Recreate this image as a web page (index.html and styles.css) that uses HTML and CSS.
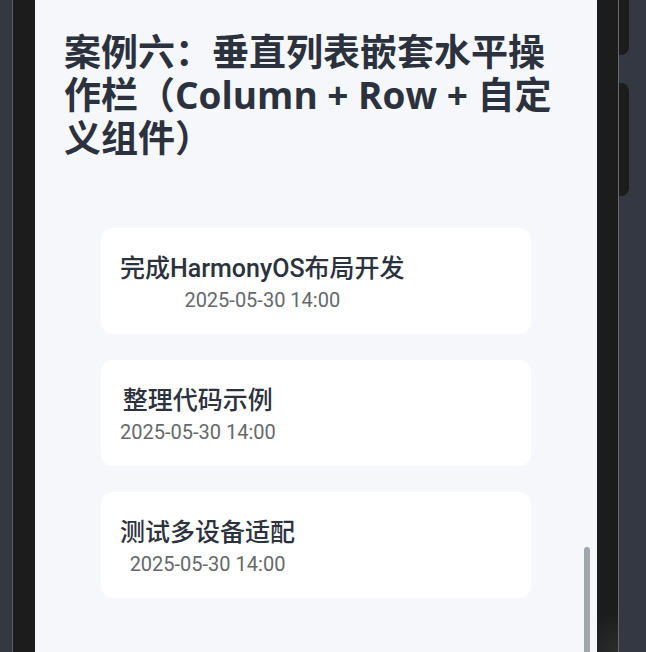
FILE: index.html
```html
<!DOCTYPE html>
<html lang="zh-CN">
<head>
    <meta charset="UTF-8">
    <meta name="viewport" content="width=device-width, initial-scale=1.0">
    <title>案例六</title>
    <link rel="stylesheet" href="styles.css">
</head>
<body>
    <div class="device">
        <div class="edge edge-left"></div>
        <div class="bezel">
            <div class="screen">
                <h1 class="page-title">案例六：垂直列表嵌套水平操作栏（Column + Row + 自定义组件）</h1>
                <div class="task-list">
                    <div class="task-card">
                        <div class="task-info">
                            <span class="task-name">完成HarmonyOS布局开发</span>
                            <span class="task-time">2025-05-30 14:00</span>
                        </div>
                    </div>
                    <div class="task-card">
                        <div class="task-info">
                            <span class="task-name">整理代码示例</span>
                            <span class="task-time">2025-05-30 14:00</span>
                        </div>
                    </div>
                    <div class="task-card">
                        <div class="task-info">
                            <span class="task-name">测试多设备适配</span>
                            <span class="task-time">2025-05-30 14:00</span>
                        </div>
                    </div>
                </div>
                <div class="scroll-thumb"></div>
            </div>
        </div>
        <div class="edge edge-right">
            <div class="side-key key-top"></div>
            <div class="side-key key-power"></div>
        </div>
    </div>
</body>
</html>
```

FILE: styles.css
```css
* {
    margin: 0;
    padding: 0;
    box-sizing: border-box;
}

body {
    background-color: #343842;
    height: 652px;
    overflow: hidden;
    font-family: Roboto, "Noto Sans CJK SC", sans-serif;
}

.device {
    display: flex;
    height: 652px;
}

.edge {
    background-color: #343842;
}

.edge-left {
    width: 12px;
}

.edge-right {
    width: 27px;
}

.bezel {
    background-color: #1c1c1c;
    background-image: radial-gradient(circle at 100% 100%, #2c2c2c 0, #1c1c1c 40px);
    border-left: 1px solid #5e5e5e;
    border-right: 1px solid #6a6a6a;
    padding: 0 21px 0 22px;
}

.screen {
    position: relative;
    width: 562px;
    height: 652px;
    background-color: #f5f7fb;
    padding: 30px 29px 0;
    overflow: hidden;
}

.page-title {
    max-width: 490px;
    color: #2c323d;
    font-family: "Open Sans", "Noto Sans CJK SC", sans-serif;
    font-size: 37px;
    line-height: 43px;
    font-weight: 700;
}

.task-list {
    display: flex;
    flex-direction: column;
    align-items: center;
    gap: 26px;
    margin-top: 69px;
}

.task-card {
    width: 430px;
    height: 106px;
    background: white;
    border-radius: 12px;
    display: flex;
    align-items: center;
    padding: 0 19px;
}

.task-info {
    display: flex;
    flex-direction: column;
    align-items: center;
    padding-top: 3px;
}

.task-name {
    color: #2c323d;
    font-size: 25px;
    line-height: 34px;
    font-weight: 500;
}

.task-time {
    color: #66686c;
    font-size: 20px;
    line-height: 28px;
}

.scroll-thumb {
    position: absolute;
    right: 7px;
    top: 547px;
    bottom: 0;
    width: 6px;
    background-color: #a1a5ad;
    border-radius: 3px 3px 0 0;
}

.side-key {
    width: 10px;
    background-color: #1c1c1c;
}

.key-top {
    height: 55px;
    border-radius: 0 0 8px 0;
}

.key-power {
    height: 113px;
    margin-top: 28px;
    border-radius: 0 8px 8px 0;
}
```
